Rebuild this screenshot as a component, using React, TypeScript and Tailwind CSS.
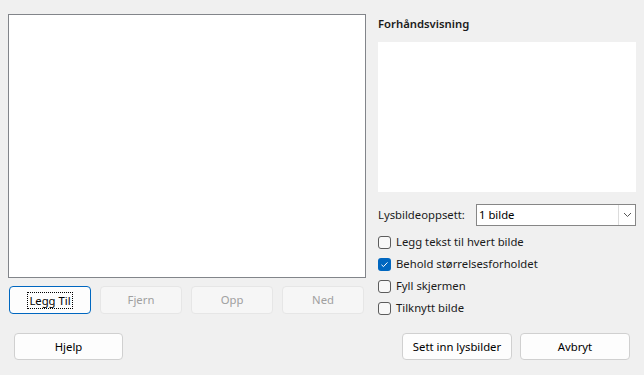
import React from "react";

const font = { fontFamily: '"Noto Sans", "Open Sans", sans-serif' };

function Btn({ label, w, disabled, focused }: { label: string; w: string; disabled?: boolean; focused?: boolean }) {
  const base = "flex items-center justify-center rounded-[4px] text-[11.3px] leading-[16px] " + w;
  if (disabled)
    return <div className={base + " h-[28px] border border-[#e6e6e6] bg-[#f6f6f6] text-[#a0a0a0]"}>{label}</div>;
  if (focused)
    return (
      <div className={base + " h-[28px] border-[1.5px] border-[#0067c0] bg-[#fdfdfd] text-black"}>
        <span className="border border-dotted border-black px-[1px] leading-[15px]">{label}</span>
      </div>
    );
  return <div className={base + " h-[27px] border border-[#d0d0d0] bg-[#fdfdfd] text-black"}>{label}</div>;
}

function Check({ label, checked }: { label: string; checked?: boolean }) {
  return (
    <div className="flex items-center h-[22px]">
      {checked ? (
        <div className="w-[13px] h-[13px] rounded-[3px] bg-[#0067c0] flex items-center justify-center">
          <svg width="9" height="9" viewBox="0 0 9 9">
            <path d="M1.5 4.8 L3.5 6.6 L7.5 2.4" stroke="white" strokeWidth="1" fill="none" />
          </svg>
        </div>
      ) : (
        <div className="w-[13px] h-[13px] rounded-[3px] border border-[#5c5c5c] bg-[#f8f8f8]" />
      )}
      <span className="ml-[5px] text-[11.3px] leading-[16px] text-[#1a1a1a]">{label}</span>
    </div>
  );
}

export default function App() {
  return (
    <div className="w-[644px] h-[375px] bg-[#f0f0f0] flex flex-col" style={font}>
      <div className="flex pl-[8px] pt-[14px]">
        <div className="w-[358px] flex flex-col">
          <div className="h-[264px] border border-[#82858a] bg-white" />
          <div className="flex gap-[9px] mt-[8px] ml-[1px]">
            <Btn label="Legg Til" w="w-[82px]" focused />
            <Btn label="Fjern" w="w-[82px]" disabled />
            <Btn label="Opp" w="w-[82px]" disabled />
            <Btn label="Ned" w="w-[82px]" disabled />
          </div>
        </div>
        <div className="ml-[12px] w-[258px] flex flex-col">
          <div className="mt-[2px] h-[16px] text-[11.3px] leading-[16px] font-semibold text-[#1a1a1a]">Forhåndsvisning</div>
          <div className="mt-[10px] h-[150px] bg-white" />
          <div className="mt-[12px] flex items-center h-[22px]">
            <span className="w-[98px] text-[11.3px] leading-[16px] text-[#1a1a1a]">Lysbildeoppsett:</span>
            <div className="flex-1 h-[22px] border border-[#868686] bg-white flex">
              <span className="flex-1 pl-[2px] text-[11.3px] leading-[20px] text-black">1 bilde</span>
              <div className="w-[17px] border-l border-[#dcdcdc] flex items-center justify-center">
                <svg width="9" height="6" viewBox="0 0 9 6">
                  <path d="M1 1 L4.5 4.5 L8 1" stroke="#555" strokeWidth="1" fill="none" />
                </svg>
              </div>
            </div>
          </div>
          <div className="mt-[5px] flex flex-col">
            <Check label="Legg tekst til hvert bilde" />
            <Check label="Behold størrelsesforholdet" checked />
            <Check label="Fyll skjermen" />
            <Check label="Tilknytt bilde" />
          </div>
        </div>
      </div>
      <div className="mt-[14px] flex justify-between px-[14px]">
        <Btn label="Hjelp" w="w-[109px]" />
        <div className="flex gap-[8px]">
          <Btn label="Sett inn lysbilder" w="w-[110px]" />
          <Btn label="Avbryt" w="w-[110px]" />
        </div>
      </div>
    </div>
  );
}
